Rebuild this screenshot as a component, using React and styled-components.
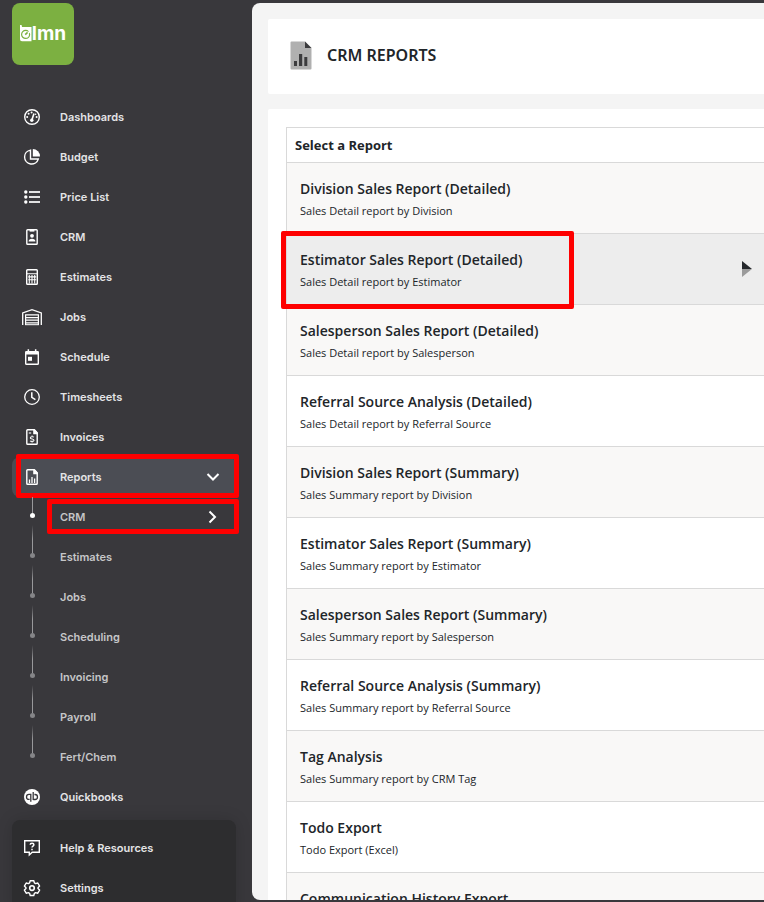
import styled, { createGlobalStyle, css } from "styled-components";

const MENU = [
  { label: "Dashboards", icon: "gauge" },
  { label: "Budget", icon: "pie" },
  { label: "Price List", icon: "list" },
  { label: "CRM", icon: "badge" },
  { label: "Estimates", icon: "calculator" },
  { label: "Jobs", icon: "garage" },
  { label: "Schedule", icon: "calendar" },
  { label: "Timesheets", icon: "clock" },
  { label: "Invoices", icon: "invoice" },
];

const REPORT_MENU = [
  "CRM",
  "Estimates",
  "Jobs",
  "Scheduling",
  "Invoicing",
  "Payroll",
  "Fert/Chem",
];

const REPORTS = [
  { title: "Division Sales Report (Detailed)", text: "Sales Detail report by Division" },
  { title: "Estimator Sales Report (Detailed)", text: "Sales Detail report by Estimator" },
  { title: "Salesperson Sales Report (Detailed)", text: "Sales Detail report by Salesperson" },
  { title: "Referral Source Analysis (Detailed)", text: "Sales Detail report by Referral Source" },
  { title: "Division Sales Report (Summary)", text: "Sales Summary report by Division" },
  { title: "Estimator Sales Report (Summary)", text: "Sales Summary report by Estimator" },
  { title: "Salesperson Sales Report (Summary)", text: "Sales Summary report by Salesperson" },
  { title: "Referral Source Analysis (Summary)", text: "Sales Summary report by Referral Source" },
  { title: "Tag Analysis", text: "Sales Summary report by CRM Tag" },
  { title: "Todo Export", text: "Todo Export (Excel)" },
  { title: "Communication History Export" },
];

const ICONS = {
  gauge: (
    <>
      <circle cx="10" cy="10" r="7.3" />
      <path d="M9.8 13.2 12 6.6" strokeWidth="1.6" />
      <circle cx="9.8" cy="13.2" r="1.7" fill="currentColor" stroke="none" />
      <g fill="currentColor" stroke="none">
        <circle cx="5.2" cy="10" r="1" />
        <circle cx="6.6" cy="6.8" r="1" />
        <circle cx="9.6" cy="5.4" r="1" />
        <circle cx="14.6" cy="10" r="1" />
        <circle cx="13.6" cy="7.2" r="0.8" />
      </g>
    </>
  ),
  pie: (
    <>
      <path d="M8.5 3.1A7 7 0 1 0 16.3 12H8.5Z" />
      <path d="M10.8 2.1a7.2 7.2 0 0 1 7.2 7.3h-7.2Z" fill="currentColor" stroke="none" />
    </>
  ),
  list: (
    <>
      <path d="M7 5h11M7 10h11M7 15h11" strokeWidth="1.8" opacity="0.85" />
      <g fill="currentColor" stroke="none">
        <circle cx="3.8" cy="5" r="1.7" />
        <circle cx="3.8" cy="10" r="1.7" />
        <circle cx="3.8" cy="15" r="1.7" />
      </g>
    </>
  ),
  badge: (
    <>
      <rect x="4.8" y="2.8" width="10.4" height="14.4" rx="0.8" />
      <path d="M7.6 2.4h4.8v2.2H7.6z" fill="currentColor" stroke="none" />
      <circle cx="10" cy="8.8" r="1.9" fill="currentColor" stroke="none" />
      <path d="M6.6 14.6c0-2 1.4-2.9 3.4-2.9s3.4.9 3.4 2.9z" fill="currentColor" stroke="none" />
    </>
  ),
  calculator: (
    <>
      <rect x="4.7" y="2.7" width="10.6" height="14.6" rx="0.8" />
      <path d="M5 6.8h10M6.2 9.9h8M6.2 12.7h8M7.3 8v8.6M10 8v8.6M12.7 8v8.6" strokeWidth="1.1" />
    </>
  ),
  garage: (
    <>
      <path d="M.7 18V6L10 2.6 19.3 6v12" strokeWidth="1.3" />
      <path d="M3.6 18V7.8h12.8V18M4 10.6h12M4 13.2h12M4 15.8h12" strokeWidth="1.2" />
      <path d="M3 17.7h14" strokeWidth="1" />
    </>
  ),
  calendar: (
    <>
      <rect x="3.7" y="4.7" width="12.6" height="12.6" rx="0.8" />
      <path d="M3.5 4.2h13v3.4h-13zM5.6 2.2h1.5V5H5.6zM12.9 2.2h1.5V5h-1.5z" fill="currentColor" stroke="none" />
      <rect x="6" y="9.8" width="4" height="4" fill="currentColor" stroke="none" />
    </>
  ),
  clock: (
    <>
      <circle cx="10" cy="10" r="7.3" strokeWidth="1.3" />
      <path d="M9.8 5.2v5.2l3.6 2.2" strokeWidth="1.5" />
    </>
  ),
  invoice: (
    <>
      <path d="M12.2 2.8H5.6a.8.8 0 0 0-.8.8v12.8c0 .5.3.8.8.8h8.8c.5 0 .8-.3.8-.8V6z" />
      <path d="M11.2 2.2h1.6l3 3.4v1.6h-4.6z" fill="currentColor" stroke="none" />
      <path d="M6.8 6h2.4" strokeWidth="1.1" />
      <path d="M11.9 10.2c-.4-.5-3.6-.8-3.6.8 0 1.5 3.7.6 3.7 2.2 0 1.5-3.3 1.3-3.9.7M10.1 8.6v1.2M10.1 14.5v1.1" strokeWidth="1.1" />
    </>
  ),
  report: (
    <>
      <path d="M12.2 2.8H5.6a.8.8 0 0 0-.8.8v12.8c0 .5.3.8.8.8h8.8c.5 0 .8-.3.8-.8V6z" />
      <path d="M11.2 2.2h1.6l3 3.4v1.6h-4.6z" fill="currentColor" stroke="none" />
      <path d="M7.5 12.5V16M10 10v6M12.6 11.5V16" strokeWidth="1.3" />
    </>
  ),
  quickbooks: (
    <>
      <circle cx="10" cy="10" r="8" fill="currentColor" stroke="none" />
      <g stroke="#38373b" strokeWidth="1.3">
        <path d="M8.8 7.4H7a2.5 2.5 0 0 0 0 5h.6M8.8 6.8v8" />
        <path d="M11.2 12.5H13a2.5 2.5 0 0 0 0-5h-.6M11.2 13V5.1" />
      </g>
    </>
  ),
  help: (
    <>
      <path d="M2.7 2.7h14.6v11.6H10.2L7.3 17v-2.7H2.7z" />
      <path d="M8.2 6.8c0-2 3.7-2 3.7 0 0 1.3-1.9 1.2-1.9 2.7M10 10.8v1.5" strokeWidth="1.5" />
    </>
  ),
  gear: (
    <>
      <path d="M8.2 2.7h3.6l.6 2.2 1.2.7 2.2-.6 1.8 3.1-1.6 1.6v.8l1.6 1.6-1.8 3.1-2.2-.6-1.2.7-.6 2.2H8.2l-.6-2.2-1.2-.7-2.2.6-1.8-3.1L4 10.5v-.8L2.4 8.1 4.2 5l2.2.6 1.2-.7z" strokeLinejoin="round" />
      <circle cx="10" cy="10.1" r="2.3" strokeWidth="1.6" />
    </>
  ),
};

const Icon = ({ name }) => (
  <IconSvg viewBox="0 0 20 20" aria-hidden="true">
    {ICONS[name]}
  </IconSvg>
);

const MenuLink = ({ label, icon, active, children }) => (
  <NavLink href="#" $active={active}>
    <Icon name={icon} />
    <NavLabel>{label}</NavLabel>
    {children}
  </NavLink>
);

const Logo = () => (
  <LogoLink href="#" aria-label="elmn">
    <LogoMark viewBox="0 0 12 18" aria-hidden="true">
      <path d="M0 0h1.6l.4 2h9.5v14.2H2a2 2 0 0 1-2-2z" fill="#fff" />
      <circle cx="5.6" cy="9.4" r="4" fill="none" stroke="#7cb041" strokeWidth="1.2" />
      <path d="m7.8 8.4 3-2.8" stroke="#fff" strokeWidth="1.6" />
      <path d="M7.6 7.4 5.2 9.6" fill="none" stroke="#7cb041" strokeWidth="1.6" />
    </LogoMark>
    <LogoText>lmn</LogoText>
  </LogoLink>
);

const Sidebar = () => (
  <Side>
    <Logo />
    <Nav aria-label="Main">
      {MENU.map((item) => (
        <MenuLink key={item.label} {...item} />
      ))}
      <MenuLink label="Reports" icon="report" active>
        <Chevron viewBox="0 0 14 14" aria-hidden="true">
          <path d="m1.5 4 5.5 5.5L12.5 4" />
        </Chevron>
        <MenuMark />
      </MenuLink>
      {REPORT_MENU.map((label, i) => (
        <SubLink href="#" key={label}>
          <Branch $first={i === 0} />
          <NavLabel $dim>{label}</NavLabel>
          {i === 0 && (
            <>
              <Chevron viewBox="0 0 14 14" aria-hidden="true">
                <path d="m3.5 1.5 5.5 5.5-5.5 5.5" />
              </Chevron>
              <SubMark />
            </>
          )}
        </SubLink>
      ))}
      <MenuLink label="Quickbooks" icon="quickbooks" />
    </Nav>
    <SideFooter>
      <MenuLink label="Help & Resources" icon="help" />
      <MenuLink label="Settings" icon="gear" />
    </SideFooter>
  </Side>
);

const App = () => {
  return (
    <Shell>
      <GlobalStyle />
      <Sidebar />
      <Main>
        <Header>
          <HeaderIcon viewBox="0 0 22 29" aria-hidden="true">
            <path d="M1.5.5H15L21.5 7v20.500a1 1 0 0 1-1 1h-19a1 1 0 0 1-1-1v-26a1 1 0 0 1 1-1z" fill="#b0b0b0" />
            <path d="M15 .5 21.5 7H15z" fill="#3c3c3e" />
            <path d="M4 20h3v5H4zM9 13h3.2v12H9zM14.3 16h3v9h-3z" fill="#3c3c3e" />
          </HeaderIcon>
          <Title>CRM REPORTS</Title>
        </Header>
        <Content>
          <Table>
            <thead>
              <tr>
                <HeadCell scope="col">Select a Report</HeadCell>
              </tr>
            </thead>
            <tbody>
              {REPORTS.map(({ title, text }, i) => (
                <Row key={title} $selected={i === 1}>
                  <Cell>
                    <ReportLink href="#">
                      <ReportTitle>{title}</ReportTitle>
                      {text && <ReportText>{text}</ReportText>}
                    </ReportLink>
                    {i === 1 && (
                      <>
                        <Arrow viewBox="0 0 10 16" aria-hidden="true">
                          <path d="M0 0v8h10z" fill="#25282c" />
                          <path d="M0 8v8l10-8z" fill="#9b9b9b" />
                        </Arrow>
                        <RowMark />
                      </>
                    )}
                  </Cell>
                </Row>
              ))}
            </tbody>
          </Table>
        </Content>
      </Main>
    </Shell>
  );
};

const GlobalStyle = createGlobalStyle`
  * {
    box-sizing: border-box;
  }

  body {
    margin: 0;
    font-family: "Open Sans", "Noto Sans", sans-serif;
    color: #212529;
  }

  a {
    color: inherit;
    text-decoration: none;
  }
`;

const Shell = styled.div`
  display: grid;
  grid-template-columns: 252px 1fr;
  height: 100vh;
  overflow: hidden;
  padding: 3px 0 2px;
  background: #39383c;
`;

const Side = styled.aside`
  display: flex;
  flex-direction: column;
  min-height: 0;
  padding: 0 16px 0 12px;
`;

const LogoLink = styled.a`
  display: flex;
  align-items: center;
  justify-content: center;
  flex-shrink: 0;
  width: 62px;
  height: 62px;
  border-radius: 8px;
  background: #7cb041;
`;

const LogoMark = styled.svg`
  width: 12px;
  height: 18px;
`;

const LogoText = styled.span`
  font-family: Inter, sans-serif;
  font-size: 19px;
  font-weight: 700;
  line-height: 24px;
  color: #fff;
`;

const Nav = styled.nav`
  display: flex;
  flex-direction: column;
  flex-shrink: 0;
  margin-top: 32px;
`;

const linkBase = css`
  position: relative;
  display: flex;
  align-items: center;
  flex-shrink: 0;
  height: 40px;
  padding: 0 16px 0 10px;
  color: #fff;
`;

const NavLink = styled.a`
  ${linkBase}
  border-radius: 8px;
  background: ${({ $active }) => ($active ? "#4b4d54" : "transparent")};
`;

const SubLink = styled.a`
  ${linkBase}
`;

const IconSvg = styled.svg`
  width: 20px;
  height: 20px;
  margin-right: 18px;
  flex-shrink: 0;
  fill: none;
  stroke: currentColor;
  stroke-width: 1.4;
`;

const NavLabel = styled.span`
  flex: 1;
  font-family: Inter, sans-serif;
  font-size: 11px;
  font-weight: 600;
  line-height: 16px;
  color: ${({ $dim }) => ($dim ? "#c6c6c8" : "#e4e4e6")};
`;

const Chevron = styled.svg`
  width: 14px;
  height: 14px;
  fill: none;
  stroke: #fff;
  stroke-width: 2;
`;

const Branch = styled.span`
  display: flex;
  flex-direction: column;
  align-items: center;
  align-self: stretch;
  justify-content: flex-start;
  width: 21px;
  margin-right: 17px;

  &::before {
    content: "";
    width: 1px;
    height: 16px;
    background: #98989b;
    ${({ $first }) =>
      !$first &&
      css`
        height: 28px;
        margin-top: -12px;
        background: linear-gradient(#39383c, #98989b 50%);
      `}
  }

  &::after {
    content: "";
    width: 5px;
    height: 5px;
    border-radius: 50%;
    background: ${({ $first }) => ($first ? "#fff" : "#858588")};
  }
`;

const SideFooter = styled.div`
  display: flex;
  flex-direction: column;
  flex-shrink: 0;
  margin-top: 3px;
  padding: 8px 0;
  border-radius: 8px;
  background: #2d2d2f;
  box-shadow: 0 0 16px rgba(0, 0, 0, 0.15);
`;

const Mark = styled.span`
  position: absolute;
  border: 5px solid #fe0000;
  border-radius: 2px;
  pointer-events: none;
`;

const MenuMark = styled(Mark)`
  inset: -3px -3px -1px 4px;
`;

const SubMark = styled(Mark)`
  inset: 2px -3px 3px 35px;
`;

const Main = styled.main`
  display: flex;
  flex-direction: column;
  gap: 15px;
  min-width: 0;
  min-height: 0;
  overflow: hidden;
  padding: 16px 0 0 16px;
  border-radius: 8px 0 0 8px;
  background: #f4f4f4;
`;

const Header = styled.header`
  display: flex;
  align-items: center;
  flex-shrink: 0;
  gap: 15px;
  height: 75px;
  padding: 0 22px 3px;
  border-radius: 2px 0 0 2px;
  background: #fff;
`;

const HeaderIcon = styled.svg`
  width: 22px;
  height: 29px;
`;

const Title = styled.h1`
  margin: 0;
  font-family: "Noto Sans", sans-serif;
  font-size: 16px;
  font-weight: 600;
  line-height: 24px;
`;

const Content = styled.section`
  flex-shrink: 0;
  padding: 18px 0 18px 18px;
  border-radius: 2px 0 0 2px;
  background: #fff;
`;

const Table = styled.table`
  width: 100%;
  border-spacing: 0;
  border-top: 1px solid #d9d9d9;
  border-left: 1px solid #d9d9d9;
`;

const HeadCell = styled.th`
  height: 35px;
  padding: 0 8px;
  border-bottom: 1px solid #d9d9d9;
  font-size: 13px;
  font-weight: 700;
  line-height: 18px;
  text-align: left;
`;

const Row = styled.tr`
  background: #fff;

  &:nth-child(odd) {
    background: #f9f8f7;
  }

  ${({ $selected }) =>
    $selected &&
    css`
      background: #ededed;
    `}
`;

const Cell = styled.td`
  position: relative;
  height: 71px;
  padding: 0;
  border-bottom: 1px solid #d9d9d9;
  vertical-align: top;
`;

const ReportLink = styled.a`
  display: flex;
  flex-direction: column;
  gap: 4px;
  padding: 16px 13px 14px;
`;

const ReportTitle = styled.span`
  font-size: 14px;
  font-weight: 600;
  line-height: 20px;
`;

const ReportText = styled.span`
  font-size: 11px;
  line-height: 16px;
`;

const Arrow = styled.svg`
  position: absolute;
  top: 27px;
  right: 12px;
  width: 10px;
  height: 16px;
`;

const RowMark = styled(Mark)`
  top: -3px;
  bottom: -5px;
  left: -6px;
  width: 293px;
`;

export default App;
